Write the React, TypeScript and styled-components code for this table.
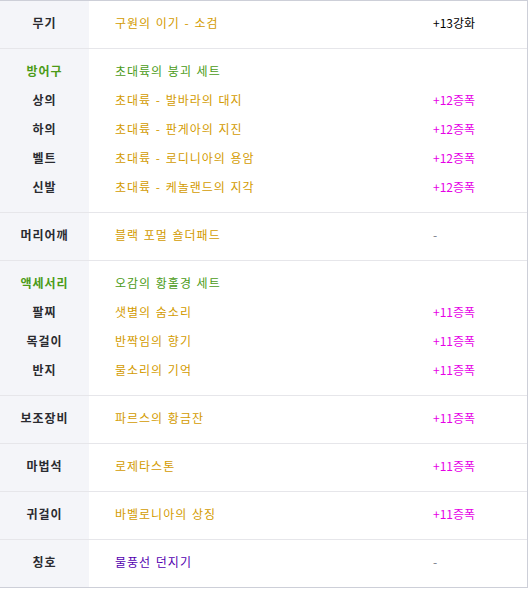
import React from "react";
import styled, { createGlobalStyle } from "styled-components";

const Global = createGlobalStyle`
  html, body { margin: 0; padding: 0; background: #fff; }
  body { font-family: "Noto Sans CJK KR", "Noto Sans", sans-serif; font-size: 12px; }
`;

const Table = styled.div`
  width: 527px;
  border-top: 1px solid #cdcfd8;
  border-right: 1px solid #cdcfd8;
  border-bottom: 1px solid #cdcfd8;
`;

const Row = styled.div`
  display: grid;
  grid-template-columns: 89px 344px 1fr;
  border-bottom: 1px solid #e6e6ea;
  &:last-child { border-bottom: none; }
`;

const LabelCol = styled.div`
  background: #f4f5f9;
  padding: 7px 0 11px;
  display: flex;
  flex-direction: column;
`;

const ValueCol = styled.div<{ $pad?: number }>`
  padding: 7px 0 11px ${(p) => p.$pad ?? 0}px;
  display: flex;
  flex-direction: column;
`;

const Line = styled.div<{ $color?: string; $bold?: boolean; $center?: boolean; $ls?: number }>`
  height: 29px;
  line-height: 29px;
  white-space: nowrap;
  color: ${(p) => p.$color ?? "#222"};
  font-weight: ${(p) => (p.$bold ? 700 : 400)};
  text-align: ${(p) => (p.$center ? "center" : "left")};
  letter-spacing: ${(p) => p.$ls ?? 0}px;
  word-spacing: ${(p) => (p.$ls ? 1 : 0)}px;
`;

const GOLD = "#d39b00";
const GREEN = "#4b9b17";
const MAGENTA = "#e600e6";
const PURPLE = "#5300b0";
const DASH = "#777b88";

type Item = { label: string; labelColor?: string; name: string; nameColor: string; extra: string; extraColor: string };

const groups: Item[][] = [
  [{ label: "무기", name: "구원의 이기 - 소검", nameColor: GOLD, extra: "+13강화", extraColor: "#000" }],
  [
    { label: "방어구", labelColor: GREEN, name: "초대륙의 붕괴 세트", nameColor: GREEN, extra: "", extraColor: "#000" },
    { label: "상의", name: "초대륙 - 발바라의 대지", nameColor: GOLD, extra: "+12증폭", extraColor: MAGENTA },
    { label: "하의", name: "초대륙 - 판게아의 지진", nameColor: GOLD, extra: "+12증폭", extraColor: MAGENTA },
    { label: "벨트", name: "초대륙 - 로디니아의 용암", nameColor: GOLD, extra: "+12증폭", extraColor: MAGENTA },
    { label: "신발", name: "초대륙 - 케놀랜드의 지각", nameColor: GOLD, extra: "+12증폭", extraColor: MAGENTA },
  ],
  [{ label: "머리어깨", name: "블랙 포멀 숄더패드", nameColor: GOLD, extra: "-", extraColor: DASH }],
  [
    { label: "액세서리", labelColor: GREEN, name: "오감의 황홀경 세트", nameColor: GREEN, extra: "", extraColor: "#000" },
    { label: "팔찌", name: "샛별의 숨소리", nameColor: GOLD, extra: "+11증폭", extraColor: MAGENTA },
    { label: "목걸이", name: "반짝임의 향기", nameColor: GOLD, extra: "+11증폭", extraColor: MAGENTA },
    { label: "반지", name: "물소리의 기억", nameColor: GOLD, extra: "+11증폭", extraColor: MAGENTA },
  ],
  [{ label: "보조장비", name: "파르스의 황금잔", nameColor: GOLD, extra: "+11증폭", extraColor: MAGENTA }],
  [{ label: "마법석", name: "로제타스톤", nameColor: GOLD, extra: "+11증폭", extraColor: MAGENTA }],
  [{ label: "귀걸이", name: "바벨로니아의 상징", nameColor: GOLD, extra: "+11증폭", extraColor: MAGENTA }],
  [{ label: "칭호", name: "물풍선 던지기", nameColor: PURPLE, extra: "-", extraColor: DASH }],
];

export default function App() {
  return (
    <>
      <Global />
      <Table>
        {groups.map((g, i) => (
          <Row key={i}>
            <LabelCol>
              {g.map((it, j) => (
                <Line key={j} $bold $center $ls={1} $color={it.labelColor ?? "#2a2b30"}>
                  {it.label}
                </Line>
              ))}
            </LabelCol>
            <ValueCol $pad={26}>
              {g.map((it, j) => (
                <Line key={j} $ls={1} $color={it.nameColor}>
                  {it.name}
                </Line>
              ))}
            </ValueCol>
            <ValueCol>
              {g.map((it, j) => (
                <Line key={j} $color={it.extraColor}>
                  {it.extra}
                </Line>
              ))}
            </ValueCol>
          </Row>
        ))}
      </Table>
    </>
  );
}
